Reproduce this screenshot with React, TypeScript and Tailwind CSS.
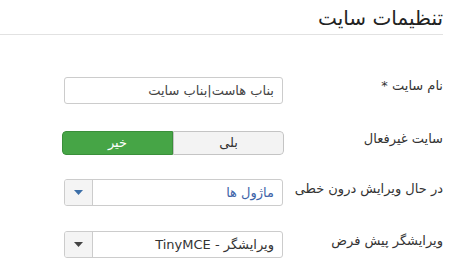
import React from "react";

const Caret = ({ color }: { color: string }) => (
  <svg width="9" height="5" viewBox="0 0 9 5">
    <path d="M0 0h9L4.5 5z" fill={color} />
  </svg>
);

const Select = ({ value, active }: { value: string; active?: boolean }) => (
  <div className="w-[219px] h-[27px] flex bg-white border border-[#cccccc] rounded-[3px] overflow-hidden">
    <div className={`flex-1 flex items-center pr-[8px] text-[13px] ${active ? "text-[#3d63a8]" : "text-[#333333]"}`}>
      {value}
    </div>
    <div className="w-[28px] flex items-center justify-center bg-[#f4f4f4] border-r border-[#cccccc]">
      <Caret color={active ? "#3d6fa8" : "#444444"} />
    </div>
  </div>
);

export default function App() {
  return (
    <div dir="rtl" className="w-[456px] h-[275px] bg-white text-[#333333]" style={{ fontFamily: '"DejaVu Sans", sans-serif' }}>
      <div className="mr-[13px] h-[35px] border-b border-[#e2e2e2] flex items-start pt-[5px]">
        <h1 className="text-[20px] leading-[26px] text-[#222222]">تنظیمات سایت</h1>
      </div>

      <div className="mr-[13px] pt-[42px] text-[13px]">
        <div className="flex items-start">
          <label className="w-[160px] leading-[18px]">نام سایت *</label>
          <div className="w-[219px] h-[27px] flex items-center bg-white border border-[#cccccc] rounded-[3px] pr-[8px] text-[#444444]">
            بناب هاست|بناب سایت
          </div>
        </div>

        <div className="flex items-start mt-[27px]">
          <label className="w-[160px] leading-[16px]">سایت غیرفعال</label>
          <div className="w-[222px] h-[24px] flex rounded-[4px] overflow-hidden -mr-[1px]">
            <div className="flex-1 flex items-center justify-center bg-[#f3f3f3] border border-[#c4c4c4] rounded-r-[4px] text-[#333333]">
              بلی
            </div>
            <div className="flex-1 flex items-center justify-center bg-[#46a546] border border-[#3a8f3a] rounded-l-[4px] text-white">
              خیر
            </div>
          </div>
        </div>

        <div className="flex items-start mt-[24px]">
          <label className="w-[160px] pt-[1px] leading-[18px]">در حال ویرایش درون خطی</label>
          <Select value="ماژول ها" active />
        </div>

        <div className="flex items-start mt-[25px]">
          <label className="w-[160px] pt-[1px] leading-[18px]">ویرایشگر پیش فرض</label>
          <Select value="ویرایشگر - TinyMCE" />
        </div>
      </div>
    </div>
  );
}
